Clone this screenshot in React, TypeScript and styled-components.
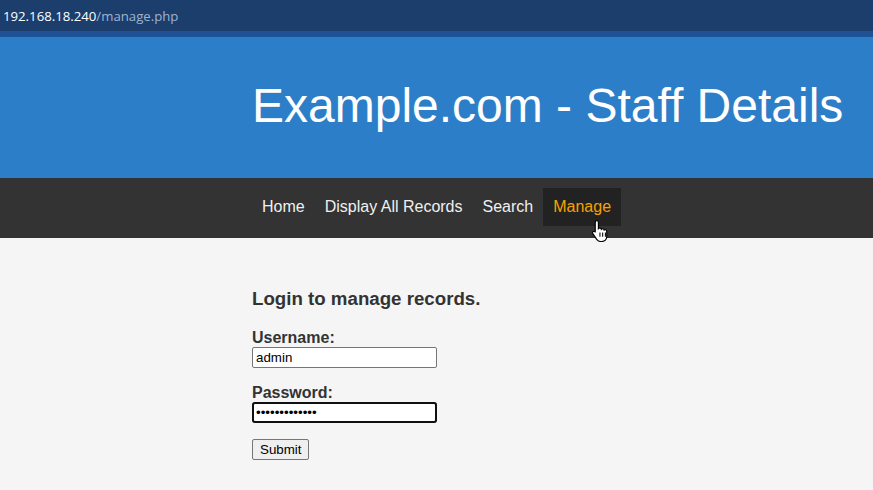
import styled, { createGlobalStyle } from "styled-components";

const GlobalStyle = createGlobalStyle`
  html, body {
    margin: 0;
    padding: 0;
    background: #f5f5f5;
  }
  body {
    font-family: "Liberation Sans", Arial, sans-serif;
    color: #333;
  }
`;

const Page = styled.div`
  width: 873px;
  height: 490px;
  overflow: hidden;
  background: #f5f5f5;
  position: relative;
`;

const UrlBar = styled.div`
  height: 31px;
  background: #1b3e6d;
  display: flex;
  align-items: center;
  padding-left: 3px;
  font-family: "Open Sans", "Noto Sans", sans-serif;
  font-size: 13.2px;
  color: #ffffff;
  border-bottom: 6px solid #1e5295;
  .path {
    color: #9fb3cf;
  }
`;

const Header = styled.header`
  height: 141px;
  background: #2d7ec8;
  display: flex;
  align-items: center;
  padding-left: 252px;
`;

const Title = styled.h1`
  margin: 0;
  font-size: 48px;
  font-weight: normal;
  color: #ffffff;
  padding-bottom: 4px;
`;

const Nav = styled.nav`
  box-sizing: border-box;
  height: 60px;
  background: #333333;
  display: flex;
  align-items: flex-start;
  padding: 10px 0 0 252px;
  position: relative;
`;

const NavItem = styled.a<{ $active?: boolean }>`
  display: block;
  padding: 10px;
  line-height: 18px;
  font-size: 16px;
  color: ${(p) => (p.$active ? "#f5a200" : "#f0f0f0")};
  background: ${(p) => (p.$active ? "#222222" : "transparent")};
  text-decoration: none;
  cursor: pointer;
`;

const Content = styled.main`
  padding: 50px 0 0 252px;
`;

const Heading = styled.h3`
  margin: 0 0 19px;
  font-size: 18.7px;
  font-weight: bold;
  line-height: 22px;
`;

const Field = styled.div`
  display: flex;
  flex-direction: column;
  align-items: flex-start;
  margin-bottom: 16px;
`;

const Label = styled.label`
  font-weight: bold;
  font-size: 16px;
  line-height: 18px;
`;

const Input = styled.input<{ $focused?: boolean }>`
  box-sizing: border-box;
  width: 185px;
  height: 21px;
  margin: 0;
  padding: 1px 3px;
  font-family: "Liberation Sans", Arial, sans-serif;
  font-size: 13.33px;
  color: #000;
  background: #fff;
  border: 1px solid #767676;
  border-radius: 2px;
  ${(p) => p.$focused && "outline: 2px solid #101010; outline-offset: -2px; border-radius: 3px;"}
`;

const SubmitButton = styled.button`
  box-sizing: border-box;
  height: 21px;
  padding: 1px 7px;
  margin: 0;
  font-family: "Liberation Sans", Arial, sans-serif;
  font-size: 13.33px;
  color: #000;
  background: #efefef;
  border: 1px solid #767676;
  border-radius: 2px;
`;

const Cursor = styled.svg`
  position: absolute;
  left: 590px;
  top: 41px;
`;

const HandCursor = () => (
  <Cursor width="22" height="23" viewBox="0 0 20 22">
    <path
      d="M6 1.5c.9 0 1.5.6 1.5 1.5v6.2c.3-.4.8-.6 1.3-.6.8 0 1.4.5 1.5 1.2.3-.3.7-.5 1.2-.5.8 0 1.4.6 1.5 1.3.3-.2.6-.3 1-.3.9 0 1.5.7 1.5 1.6v4.6c0 2.9-2 5-4.8 5H9.6c-1.7 0-2.8-.7-3.7-2L2.2 14c-.5-.8-.3-1.6.4-2 .6-.4 1.4-.2 1.9.4l0 0L4.5 13V3c0-.9.6-1.5 1.5-1.5z"
      fill="#fff"
      stroke="#000"
      strokeWidth="1.1"
    />
    <path d="M9 13v4M11.6 13v4M14.2 13v4" stroke="#000" strokeWidth="1" />
  </Cursor>
);

export default function App() {
  return (
    <Page>
      <GlobalStyle />
      <UrlBar>
        <span>192.168.18.240</span>
        <span className="path">/manage.php</span>
      </UrlBar>
      <Header>
        <Title>Example.com - Staff Details</Title>
      </Header>
      <Nav>
        <NavItem>Home</NavItem>
        <NavItem>Display All Records</NavItem>
        <NavItem>Search</NavItem>
        <NavItem $active>Manage</NavItem>
        <HandCursor />
      </Nav>
      <Content>
        <Heading>Login to manage records.</Heading>
        <form onSubmit={(e) => e.preventDefault()}>
          <Field>
            <Label htmlFor="username">Username:</Label>
            <Input id="username" type="text" defaultValue="admin" />
          </Field>
          <Field>
            <Label htmlFor="password">Password:</Label>
            <Input id="password" type="password" defaultValue="adminpassword" $focused />
          </Field>
          <SubmitButton type="submit">Submit</SubmitButton>
        </form>
      </Content>
    </Page>
  );
}
